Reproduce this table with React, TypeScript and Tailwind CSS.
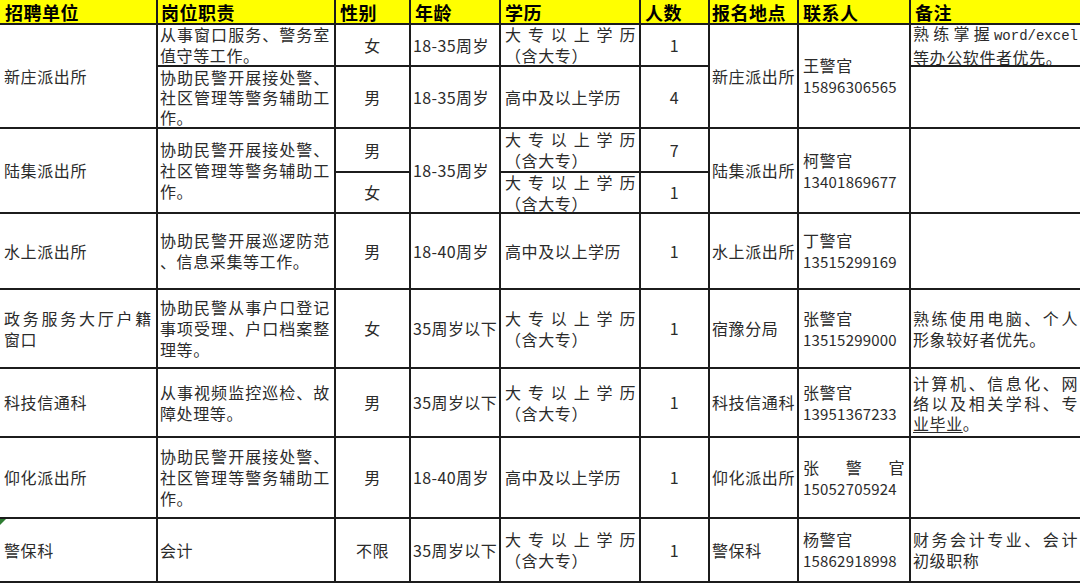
import React from "react";

function J({ t, className = "" }: { t: string; className?: string }) {
  return (
    <div className={"flex justify-between " + className}>
      {Array.from(t).map((ch, i) => (
        <span key={i}>{ch}</span>
      ))}
    </div>
  );
}

function Cell({
  pos,
  className = "",
  children,
}: {
  pos: string;
  className?: string;
  children?: React.ReactNode;
}) {
  return (
    <div className={"relative bg-white flex flex-col justify-center " + pos + " " + className}>
      {children}
    </div>
  );
}

function H({ pos, className = "", children }: { pos: string; className?: string; children: React.ReactNode }) {
  return (
    <div
      className={
        "bg-[#ffff00] flex items-center text-[18px] leading-[22px] font-bold text-black tracking-[0.5px] " +
        pos +
        " " +
        className
      }
    >
      {children}
    </div>
  );
}

function Edu() {
  return (
    <>
      <J t="大专以上学历" />
      <div>（含大专）</div>
    </>
  );
}

function Contact({ name, phone }: { name: string; phone: string }) {
  return (
    <>
      <div className="leading-[22px]">{name}</div>
      <div className="leading-[22px] text-[15px] tracking-[0.2px]">{phone}</div>
    </>
  );
}

export default function App() {
  const c1 = "pl-[4px] pr-[4px]";
  const c2 = "pl-[2px] pr-[4px]";
  const c2t = "pl-[2px] pr-[4px] leading-[20px]";
  const c3 = "items-center";
  const c4 = "pl-[2px] tracking-[0.4px]";
  const c5 = "pl-[4px] pr-[3px]";
  const c6 = "items-center";
  const c7 = "pl-[2px]";
  const c8 = "pl-[4px] pr-[4px]";
  const c9 = "pl-[2px] pr-[2px]";

  return (
    <div className="w-[1080px] h-[583px] bg-white overflow-hidden font-['Noto_Sans_CJK_SC','Noto_Sans',sans-serif]">
      <div className="grid w-[1080px] h-[583px] bg-[#1c1c1c] gap-[2px] pb-[2px] grid-cols-[156px_176px_73px_88px_138px_67px_87px_110px_169px] grid-rows-[23px_40px_60px_42px_39px_74px_77px_67px_79px_62px] text-[16px] leading-[21px] text-[#2b2b2b] tracking-[0.6px]">
        {/* Header */}
        <H pos="col-start-1 row-start-1" className="pl-[5px]">招聘单位</H>
        <H pos="col-start-2 row-start-1" className="pl-[3px]">岗位职责</H>
        <H pos="col-start-3 row-start-1" className="pl-[4px]">性别</H>
        <H pos="col-start-4 row-start-1" className="pl-[4px]">年龄</H>
        <H pos="col-start-5 row-start-1" className="pl-[4px]">学历</H>
        <H pos="col-start-6 row-start-1" className="pl-[4px]">人数</H>
        <H pos="col-start-7 row-start-1" className="pl-[2px]">报名地点</H>
        <H pos="col-start-8 row-start-1" className="pl-[4px]">联系人</H>
        <H pos="col-start-9 row-start-1" className="pl-[4px]">备注</H>

        {/* 新庄派出所 */}
        <Cell pos="col-start-1 row-start-2 row-span-2" className={c1}>新庄派出所</Cell>
        <Cell pos="col-start-2 row-start-2" className={c2}>
          <J t="从事窗口服务、警务室" />
          <div>值守等工作。</div>
        </Cell>
        <Cell pos="col-start-3 row-start-2" className={c3}>女</Cell>
        <Cell pos="col-start-4 row-start-2" className={c4}>18-35周岁</Cell>
        <Cell pos="col-start-5 row-start-2" className={c5}><Edu /></Cell>
        <Cell pos="col-start-6 row-start-2" className={c6}>1</Cell>
        <Cell pos="col-start-2 row-start-3" className={c2t}>
          <J t="协助民警开展接处警、" />
          <J t="社区管理等警务辅助工" />
          <div>作。</div>
        </Cell>
        <Cell pos="col-start-3 row-start-3" className={c3}>男</Cell>
        <Cell pos="col-start-4 row-start-3" className={c4}>18-35周岁</Cell>
        <Cell pos="col-start-5 row-start-3" className={c5}>高中及以上学历</Cell>
        <Cell pos="col-start-6 row-start-3" className={c6}>4</Cell>
        <Cell pos="col-start-7 row-start-2 row-span-2" className={c7}>新庄派出所</Cell>
        <Cell pos="col-start-8 row-start-2 row-span-2" className={c8}>
          <Contact name="王警官" phone="15896306565" />
        </Cell>
        <Cell pos="col-start-9 row-start-2" className={c9}>
          <div className="flex justify-between items-baseline">
            <span>熟</span>
            <span>练</span>
            <span>掌</span>
            <span>握</span>
            <span className="font-['Liberation_Mono',monospace] text-[14px] tracking-[0px]">word/excel</span>
          </div>
          <div>等办公软件者优先。</div>
        </Cell>
        <Cell pos="col-start-9 row-start-3" className={c9} />

        {/* 陆集派出所 */}
        <Cell pos="col-start-1 row-start-4 row-span-2" className={c1}>陆集派出所</Cell>
        <Cell pos="col-start-2 row-start-4 row-span-2" className={c2}>
          <J t="协助民警开展接处警、" />
          <J t="社区管理等警务辅助工" />
          <div>作。</div>
        </Cell>
        <Cell pos="col-start-3 row-start-4" className={c3}>男</Cell>
        <Cell pos="col-start-3 row-start-5" className={c3}>女</Cell>
        <Cell pos="col-start-4 row-start-4 row-span-2" className={c4}>18-35周岁</Cell>
        <Cell pos="col-start-5 row-start-4" className={c5}><Edu /></Cell>
        <Cell pos="col-start-5 row-start-5" className={c5}><Edu /></Cell>
        <Cell pos="col-start-6 row-start-4" className={c6}>7</Cell>
        <Cell pos="col-start-6 row-start-5" className={c6}>1</Cell>
        <Cell pos="col-start-7 row-start-4 row-span-2" className={c7}>陆集派出所</Cell>
        <Cell pos="col-start-8 row-start-4 row-span-2" className={c8}>
          <Contact name="柯警官" phone="13401869677" />
        </Cell>
        <Cell pos="col-start-9 row-start-4 row-span-2" className={c9} />

        {/* 水上派出所 */}
        <Cell pos="col-start-1 row-start-6" className={c1}>水上派出所</Cell>
        <Cell pos="col-start-2 row-start-6" className={c2}>
          <J t="协助民警开展巡逻防范" />
          <div>、信息采集等工作。</div>
        </Cell>
        <Cell pos="col-start-3 row-start-6" className={c3}>男</Cell>
        <Cell pos="col-start-4 row-start-6" className={c4}>18-40周岁</Cell>
        <Cell pos="col-start-5 row-start-6" className={c5}>高中及以上学历</Cell>
        <Cell pos="col-start-6 row-start-6" className={c6}>1</Cell>
        <Cell pos="col-start-7 row-start-6" className={c7}>水上派出所</Cell>
        <Cell pos="col-start-8 row-start-6" className={c8}>
          <Contact name="丁警官" phone="13515299169" />
        </Cell>
        <Cell pos="col-start-9 row-start-6" className={c9} />

        {/* 政务服务大厅户籍窗口 */}
        <Cell pos="col-start-1 row-start-7" className={c1}>
          <J t="政务服务大厅户籍" />
          <div>窗口</div>
        </Cell>
        <Cell pos="col-start-2 row-start-7" className={c2}>
          <J t="协助民警从事户口登记" />
          <J t="事项受理、户口档案整" />
          <div>理等。</div>
        </Cell>
        <Cell pos="col-start-3 row-start-7" className={c3}>女</Cell>
        <Cell pos="col-start-4 row-start-7" className={c4}>35周岁以下</Cell>
        <Cell pos="col-start-5 row-start-7" className={c5}><Edu /></Cell>
        <Cell pos="col-start-6 row-start-7" className={c6}>1</Cell>
        <Cell pos="col-start-7 row-start-7" className={c7}>宿豫分局</Cell>
        <Cell pos="col-start-8 row-start-7" className={c8}>
          <Contact name="张警官" phone="13515299000" />
        </Cell>
        <Cell pos="col-start-9 row-start-7" className={c9}>
          <J t="熟练使用电脑、个人" />
          <div>形象较好者优先。</div>
        </Cell>

        {/* 科技信通科 */}
        <Cell pos="col-start-1 row-start-8" className={c1}>科技信通科</Cell>
        <Cell pos="col-start-2 row-start-8" className={c2}>
          <J t="从事视频监控巡检、故" />
          <div>障处理等。</div>
        </Cell>
        <Cell pos="col-start-3 row-start-8" className={c3}>男</Cell>
        <Cell pos="col-start-4 row-start-8" className={c4}>35周岁以下</Cell>
        <Cell pos="col-start-5 row-start-8" className={c5}><Edu /></Cell>
        <Cell pos="col-start-6 row-start-8" className={c6}>1</Cell>
        <Cell pos="col-start-7 row-start-8" className={c7}>科技信通科</Cell>
        <Cell pos="col-start-8 row-start-8" className={c8}>
          <Contact name="张警官" phone="13951367233" />
        </Cell>
        <Cell pos="col-start-9 row-start-8" className={"pl-[2px] pr-[2px] leading-[20px]"}>
          <J t="计算机、信息化、网" />
          <J t="络以及相关学科、专" />
          <div>
            <span className="underline decoration-1 underline-offset-2">业毕业</span>。
          </div>
        </Cell>

        {/* 仰化派出所 */}
        <Cell pos="col-start-1 row-start-9" className={c1}>仰化派出所</Cell>
        <Cell pos="col-start-2 row-start-9" className={c2}>
          <J t="协助民警开展接处警、" />
          <J t="社区管理等警务辅助工" />
          <div>作。</div>
        </Cell>
        <Cell pos="col-start-3 row-start-9" className={c3}>男</Cell>
        <Cell pos="col-start-4 row-start-9" className={c4}>18-40周岁</Cell>
        <Cell pos="col-start-5 row-start-9" className={c5}>高中及以上学历</Cell>
        <Cell pos="col-start-6 row-start-9" className={c6}>1</Cell>
        <Cell pos="col-start-7 row-start-9" className={c7}>仰化派出所</Cell>
        <Cell pos="col-start-8 row-start-9" className={c8}>
          <J t="张警官" className="leading-[22px]" />
          <div className="leading-[22px] text-[15px] tracking-[0.2px]">15052705924</div>
        </Cell>
        <Cell pos="col-start-9 row-start-9" className={c9} />

        {/* 警保科 */}
        <Cell pos="col-start-1 row-start-10" className={c1}>
          <span className="absolute left-0 top-0 w-0 h-0 border-t-[6px] border-r-[6px] border-t-[#2e7d32] border-r-transparent" />
          警保科
        </Cell>
        <Cell pos="col-start-2 row-start-10" className={c2}>会计</Cell>
        <Cell pos="col-start-3 row-start-10" className={c3}>不限</Cell>
        <Cell pos="col-start-4 row-start-10" className={c4}>35周岁以下</Cell>
        <Cell pos="col-start-5 row-start-10" className={c5}><Edu /></Cell>
        <Cell pos="col-start-6 row-start-10" className={c6}>1</Cell>
        <Cell pos="col-start-7 row-start-10" className={c7}>警保科</Cell>
        <Cell pos="col-start-8 row-start-10" className={c8}>
          <Contact name="杨警官" phone="15862918998" />
        </Cell>
        <Cell pos="col-start-9 row-start-10" className={c9}>
          <J t="财务会计专业、会计" />
          <div>初级职称</div>
        </Cell>
      </div>
    </div>
  );
}
